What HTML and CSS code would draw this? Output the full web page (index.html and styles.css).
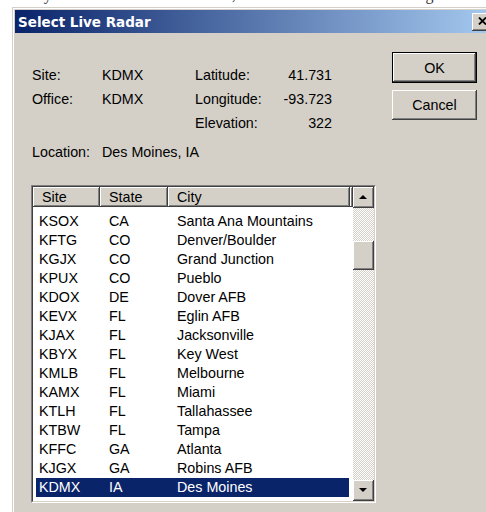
FILE: index.html
```html
<!DOCTYPE html>
<html lang="en">
<head>
<meta charset="utf-8">
<title>Select Live Radar</title>
<link rel="stylesheet" href="styles.css">
</head>
<body>
<div class="page-caption"><p>Once you have selected a radar site, click OK to load the live image.</p></div>

<div class="window">
  <div class="titlebar">
    <span class="title">Select Live Radar</span>
    <button class="close" type="button" aria-label="Close">
      <svg width="9" height="8" viewBox="0 0 9 8"><path d="M1 0.5 L8 7.5 M8 0.5 L1 7.5" stroke="#000" stroke-width="1.8" fill="none"/></svg>
    </button>
  </div>

  <div class="client">
    <div class="main">
      <div class="info">
        <span>Site:</span><span>KDMX</span><span>Latitude:</span><span class="num">41.731</span>
        <span>Office:</span><span>KDMX</span><span>Longitude:</span><span class="num">-93.723</span>
        <span></span><span></span><span>Elevation:</span><span class="num">322</span>
      </div>
      <div class="location"><span>Location:</span><span>Des Moines, IA</span></div>

      <div class="listview">
        <div class="lv-inner">
          <div class="lv-main">
            <div class="lv-header">
              <div class="hcell h-site">Site</div>
              <div class="hcell h-state">State</div>
              <div class="hcell h-city">City</div>
              <div class="hcell h-fill"></div>
            </div>
            <div class="lv-rows">
              <div class="row"><span class="c-site">KSOX</span><span class="c-state">CA</span><span class="c-city">Santa Ana Mountains</span></div>
              <div class="row"><span class="c-site">KFTG</span><span class="c-state">CO</span><span class="c-city">Denver/Boulder</span></div>
              <div class="row"><span class="c-site">KGJX</span><span class="c-state">CO</span><span class="c-city">Grand Junction</span></div>
              <div class="row"><span class="c-site">KPUX</span><span class="c-state">CO</span><span class="c-city">Pueblo</span></div>
              <div class="row"><span class="c-site">KDOX</span><span class="c-state">DE</span><span class="c-city">Dover AFB</span></div>
              <div class="row"><span class="c-site">KEVX</span><span class="c-state">FL</span><span class="c-city">Eglin AFB</span></div>
              <div class="row"><span class="c-site">KJAX</span><span class="c-state">FL</span><span class="c-city">Jacksonville</span></div>
              <div class="row"><span class="c-site">KBYX</span><span class="c-state">FL</span><span class="c-city">Key West</span></div>
              <div class="row"><span class="c-site">KMLB</span><span class="c-state">FL</span><span class="c-city">Melbourne</span></div>
              <div class="row"><span class="c-site">KAMX</span><span class="c-state">FL</span><span class="c-city">Miami</span></div>
              <div class="row"><span class="c-site">KTLH</span><span class="c-state">FL</span><span class="c-city">Tallahassee</span></div>
              <div class="row"><span class="c-site">KTBW</span><span class="c-state">FL</span><span class="c-city">Tampa</span></div>
              <div class="row"><span class="c-site">KFFC</span><span class="c-state">GA</span><span class="c-city">Atlanta</span></div>
              <div class="row"><span class="c-site">KJGX</span><span class="c-state">GA</span><span class="c-city">Robins AFB</span></div>
              <div class="row selected"><span class="c-site">KDMX</span><span class="c-state">IA</span><span class="c-city">Des Moines</span></div>
            </div>
          </div>
          <div class="vscroll">
            <div class="sb-btn"><span class="arrow-up"></span></div>
            <div class="sb-track"><div class="sb-thumb"></div></div>
            <div class="sb-btn"><span class="arrow-down"></span></div>
          </div>
        </div>
      </div>
    </div>

    <div class="buttons">
      <button class="btn default" type="button">OK</button>
      <button class="btn" type="button">Cancel</button>
    </div>
  </div>
</div>
</body>
</html>
```

FILE: styles.css
```css
html, body {
  margin: 0;
  width: 486px;
  height: 512px;
  overflow: hidden;
  background: #fff;
}

body {
  font-family: "Liberation Sans", Arial, sans-serif;
  font-size: 14.3px;
  color: #000;
}

/* page text above the dialog, clipped by the window */
.page-caption {
  height: 7px;
  overflow: hidden;
}

.page-caption p {
  margin: -14px 0 0 6px;
  font: 16px/18px "Liberation Serif", serif;
  white-space: nowrap;
  color: #333;
}

/* dialog window */
.window {
  margin-left: 12px;
  width: 486px;
  height: 520px;
  box-sizing: border-box;
  background: #d4d0c8;
  border: 1px solid;
  border-color: #d4d0c8 #404040 #404040 #d4d0c8;
  box-shadow: inset 1px 1px #fff, inset -1px -1px #808080;
  padding: 2px;
}

.titlebar {
  height: 23px;
  display: flex;
  align-items: center;
  padding: 0 2px 0 3px;
  background: linear-gradient(to right, #0a246a, #a6caf0);
}

.title {
  flex: 1;
  color: #fff;
  font: bold 13.5px "DejaVu Sans", Verdana, sans-serif;
}

button {
  font: inherit;
  color: #000;
  margin: 0;
  padding: 0;
  border: 0;
}

.close,
.btn,
.sb-btn,
.sb-thumb {
  background: #d4d0c8;
  box-shadow: inset -1px -1px #404040, inset 1px 1px #fff, inset -2px -2px #808080, inset 2px 2px #d4d0c8;
}

.close {
  width: 21px;
  height: 18px;
  display: flex;
  align-items: center;
  justify-content: center;
  padding: 0 1px 1px 0;
  box-sizing: border-box;
}

.client {
  display: flex;
  align-items: flex-start;
  gap: 16px;
  padding: 19px 0 0 16px;
}

.main {
  width: 345px;
  padding-top: 11px;
}

.info {
  display: grid;
  grid-template-columns: 70px 93px 80px 57px;
  grid-auto-rows: 24px;
  align-items: center;
  padding-left: 1px;
}

.num {
  text-align: right;
}

.location {
  display: grid;
  grid-template-columns: 70px auto;
  line-height: 24px;
  margin-top: 5px;
  padding-left: 1px;
}

/* list view with sunken frame */
.listview {
  margin-top: 21px;
  height: 318px;
  box-sizing: border-box;
  border: 1px solid;
  border-color: #808080 #fff #fff #808080;
}

.lv-inner {
  height: 100%;
  box-sizing: border-box;
  border: 1px solid;
  border-color: #404040 #d4d0c8 #d4d0c8 #404040;
  display: flex;
  background: #fff;
}

.lv-main {
  flex: 1;
  min-width: 0;
  display: flex;
  flex-direction: column;
}

.lv-header {
  display: flex;
  height: 20px;
  background: #d4d0c8;
}

.hcell {
  box-sizing: border-box;
  height: 20px;
  line-height: 20px;
  padding-left: 9px;
  box-shadow: inset -1px -1px #404040, inset 1px 1px #fff, inset -2px -2px #808080;
}

.h-site { width: 67px; }
.h-state { width: 68px; }
.h-city { width: 182px; }
.h-fill { flex: 1; padding: 0; }

.lv-rows {
  flex: 1;
  overflow: hidden;
  padding: 5px 4px 0 3px;
}

.row {
  display: flex;
  height: 19px;
  line-height: 19px;
  white-space: nowrap;
}

.row.selected {
  background: #0a246a;
  color: #fff;
}

.c-site {
  width: 64px;
  box-sizing: border-box;
  padding-left: 3px;
}

.c-state {
  width: 68px;
  box-sizing: border-box;
  padding-left: 9px;
}

.c-city {
  flex: 1;
  padding-left: 9px;
}

/* vertical scrollbar */
.vscroll {
  width: 21px;
  display: flex;
  flex-direction: column;
}

.sb-btn {
  height: 21px;
  flex: none;
  display: flex;
  align-items: center;
  justify-content: center;
  padding: 0 1px 1px 0;
  box-sizing: border-box;
}

.arrow-up,
.arrow-down {
  width: 0;
  height: 0;
  border-left: 4px solid transparent;
  border-right: 4px solid transparent;
}

.arrow-up { border-bottom: 4px solid #000; }
.arrow-down { border-top: 4px solid #000; }

.sb-track {
  flex: 1;
  background-color: #d4d0c8;
  background-image: conic-gradient(#fff 25%, #d4d0c8 0 50%, #fff 0 75%, #d4d0c8 0);
  background-size: 2px 2px;
}

.sb-thumb {
  margin-top: 33px;
  height: 29px;
}

/* dialog buttons */
.buttons {
  width: 85px;
  display: flex;
  flex-direction: column;
  gap: 7px;
}

.btn {
  height: 30px;
  box-sizing: border-box;
}

.btn.default {
  height: 31px;
  border: 1px solid #000;
}
```
